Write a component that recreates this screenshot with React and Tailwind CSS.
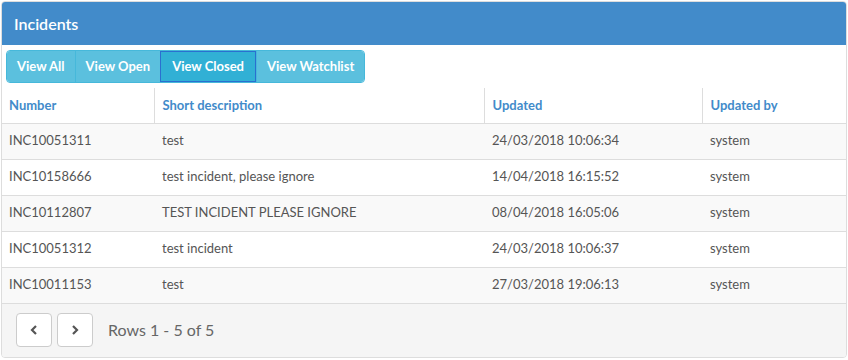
import React from "react";

const rows = [
  ["INC10051311", "test", "24/03/2018 10:06:34", "system"],
  ["INC10158666", "test incident, please ignore", "14/04/2018 16:15:52", "system"],
  ["INC10112807", "TEST INCIDENT PLEASE IGNORE", "08/04/2018 16:05:06", "system"],
  ["INC10051312", "test incident", "24/03/2018 10:06:37", "system"],
  ["INC10011153", "test", "27/03/2018 19:06:13", "system"],
];

const tabs = ["View All", "View Open", "View Closed", "View Watchlist"];

export default function App() {
  return (
    <div className="w-[848px] h-[360px] bg-white p-px font-['Lato','Open_Sans',sans-serif]">
      <div className="border border-[#ddd] rounded-[4px] overflow-hidden h-[357px] flex flex-col">
        {/* Header */}
        <div className="bg-[#428bca] h-[43px] flex items-center px-[12px]">
          <h2 className="text-white text-[16px] font-semibold">Incidents</h2>
        </div>

        {/* Filter buttons */}
        <div className="px-[4px] pt-[5px] flex">
          <div className="flex rounded-[4px] overflow-hidden h-[33px] border border-[#46b8da]">
            {tabs.map((t) => (
              <button
                key={t}
                className={
                  t === "View Closed"
                    ? "bg-[#31b0d5] text-white text-[13px] font-bold px-[11px] border border-[#2a6fd0]"
                    : "bg-[#5bc0de] text-white text-[13px] font-bold px-[10px] border-l border-[#46b8da] first:border-l-0"
                }
              >
                {t}
              </button>
            ))}
          </div>
        </div>

        {/* Table */}
        <table className="w-full mt-[5px] border-collapse text-[13px] text-[#555]">
          <thead>
            <tr className="h-[35px] border-b border-[#ddd]">
              <th className="w-[152px] text-left pl-[7px] text-[#428bca] font-bold">Number</th>
              <th className="w-[330px] text-left pl-[8px] text-[#428bca] font-bold border-l border-[#ddd]">Short description</th>
              <th className="w-[218px] text-left pl-[8px] text-[#428bca] font-bold border-l border-[#ddd]">Updated</th>
              <th className="text-left pl-[8px] text-[#428bca] font-bold border-l border-[#ddd]">Updated by</th>
            </tr>
          </thead>
          <tbody>
            {rows.map((r, i) => (
              <tr key={r[0]} className={(i % 2 === 0 ? "bg-[#f9f9f9]" : "bg-white") + " h-[36px] border-b border-[#ddd]"}>
                {r.map((c, j) => (
                  <td key={j} className={j === 0 ? "pl-[7px]" : "pl-[8px]"}>{c}</td>
                ))}
              </tr>
            ))}
          </tbody>
        </table>

        {/* Footer */}
        <div className="flex-1 bg-[#f5f5f5] flex items-center px-[14px] gap-[5px]">
          <button className="w-[36px] h-[34px] bg-white border border-[#ccc] rounded-[4px] flex items-center justify-center text-[#555]">
            <svg width="10" height="12" viewBox="0 0 10 12"><path d="M7 2 L3 6 L7 10" fill="none" stroke="currentColor" strokeWidth="2.2" /></svg>
          </button>
          <button className="w-[36px] h-[34px] bg-white border border-[#ccc] rounded-[4px] flex items-center justify-center text-[#555]">
            <svg width="10" height="12" viewBox="0 0 10 12"><path d="M3 2 L7 6 L3 10" fill="none" stroke="currentColor" strokeWidth="2.2" /></svg>
          </button>
          <span className="ml-[10px] text-[16px] text-[#666]">Rows 1 - 5 of 5</span>
        </div>
      </div>
    </div>
  );
}
